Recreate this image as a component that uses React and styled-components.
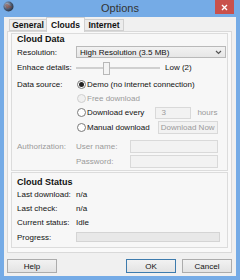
import React from "react"
import styled, { createGlobalStyle } from "styled-components"

const GlobalStyle = createGlobalStyle`
  html, body {
    margin: 0;
    padding: 0;
    background: #75abe6;
  }
  body {
    font-family: "Liberation Sans", Arial, sans-serif;
    font-size: 8px;
    color: #111;
  }
`

const Frame = styled.div`
  width: 240px;
  height: 280px;
  box-sizing: border-box;
  background: #75abe6;
  display: flex;
  flex-direction: column;
  padding: 0 4px 4px 4px;
`

const TitleBar = styled.div`
  height: 17px;
  display: flex;
  align-items: center;
  position: relative;
`

const Title = styled.div`
  flex: 1;
  text-align: center;
  font-size: 11px;
  color: #333;
  margin-top: -2px;
`

const AppIcon = styled.svg`
  position: absolute;
  left: -1px;
  top: 1px;
`

const CloseButton = styled.div`
  position: absolute;
  right: 2px;
  top: 0;
  width: 19px;
  height: 14px;
  background: #c9514c;
  display: flex;
  align-items: center;
  justify-content: center;
`

const Client = styled.div`
  flex: 1;
  background: #f0f0f0;
  display: flex;
  flex-direction: column;
`

const TabStrip = styled.div`
  height: 14px;
  display: flex;
  align-items: flex-end;
  padding-left: 5px;
  position: relative;
  z-index: 1;
`

const Tab = styled.div`
  box-sizing: border-box;
  height: ${({ $active }) => ($active ? 15 : 12)}px;
  margin-bottom: ${({ $active }) => ($active ? -1 : 0)}px;
  width: ${({ $w }) => $w}px;
  border: 1px solid #d0d0d0;
  border-bottom: ${({ $active }) => ($active ? "none" : "1px solid #d0d0d0")};
  background: ${({ $active }) => ($active ? "#f9f9f9" : "#ececec")};
  font-weight: bold;
  font-size: 8.5px;
  display: flex;
  align-items: ${({ $active }) => ($active ? "flex-start" : "center")};
  padding-top: ${({ $active }) => ($active ? 2 : 0)}px;
  justify-content: center;
  margin-right: -1px;
`

const TabPage = styled.div`
  box-sizing: border-box;
  margin: 0 4px 0 3px;
  height: 222px;
  border: 1px solid #d9d9d9;
  background: #f9f9f9;
  padding: 1px 3px 2px 3px;
  display: flex;
  flex-direction: column;
  gap: 1px;
`

const Group = styled.div`
  border: 1px solid #dcdcdc;
  background: #f7f7f7;
  padding: 0 0 ${({ $pb }) => $pb}px 5px;
  display: flex;
  flex-direction: column;
`

const Heading = styled.div`
  height: ${({ $h }) => $h}px;
  padding-top: ${({ $pt }) => $pt || 0}px;
  display: flex;
  align-items: center;
  font-weight: bold;
  font-size: 9px;
`

const Row = styled.div`
  height: ${({ $h }) => $h}px;
  margin-top: ${({ $mt }) => $mt || 0}px;
  display: flex;
  align-items: center;
`

const Label = styled.div`
  width: 59px;
  flex: none;
  color: ${({ $disabled }) => ($disabled ? "#9a9a9a" : "inherit")};
`

const Text = styled.span`
  color: ${({ $disabled }) => ($disabled ? "#9a9a9a" : "inherit")};
  margin-left: ${({ $ml }) => $ml || 0}px;
`

const Combo = styled.div`
  box-sizing: border-box;
  width: 150px;
  height: 12px;
  border: 1px solid #b9b9b9;
  background: linear-gradient(#f2f2f2, #e6e6e6);
  display: flex;
  align-items: center;
  padding: 0 3px;
  justify-content: space-between;
`

const SliderTrack = styled.div`
  position: relative;
  width: 84px;
  height: 2px;
  background: #dcdcdc;
  border: 1px solid #d0d0d0;
  box-sizing: border-box;
  margin-right: 5px;
`

const SliderThumb = styled.div`
  position: absolute;
  left: 26px;
  top: -6px;
  width: 7px;
  height: 13px;
  box-sizing: border-box;
  border: 1px solid #b8b8b8;
  background: #f4f4f4;
`

const Radio = styled.div`
  box-sizing: border-box;
  width: 9px;
  height: 9px;
  border-radius: 50%;
  border: 1px solid ${({ $disabled }) => ($disabled ? "#cfcfcf" : "#7a7a7a")};
  background: ${({ $disabled }) => ($disabled ? "#f0f0f0" : "#fff")};
  display: flex;
  align-items: center;
  justify-content: center;
  margin-left: 1px;
  margin-right: 1px;
  flex: none;
  &::after {
    content: "";
    display: ${({ $checked }) => ($checked ? "block" : "none")};
    width: 5px;
    height: 5px;
    border-radius: 50%;
    background: #222;
  }
`

const Input = styled.div`
  box-sizing: border-box;
  width: ${({ $w }) => $w}px;
  height: ${({ $h }) => $h || 13}px;
  margin-left: ${({ $ml }) => $ml || 0}px;
  border: 1px solid #d9d9d9;
  background: #f2f2f2;
  color: #9a9a9a;
  display: flex;
  align-items: center;
  padding-left: 5px;
`

const FlatButton = styled.div`
  box-sizing: border-box;
  width: ${({ $w }) => $w}px;
  height: 13px;
  margin-left: ${({ $ml }) => $ml || 0}px;
  border: 1px solid #d9d9d9;
  background: #f2f2f2;
  color: #9a9a9a;
  display: flex;
  align-items: center;
  justify-content: center;
`

const Progress = styled.div`
  box-sizing: border-box;
  width: 144px;
  height: 10px;
  border: 1px solid #d4d4d4;
  background: #e8e8e8;
`

const ButtonBar = styled.div`
  display: flex;
  align-items: center;
  padding: 6px 4px 0 3px;
`

const Button = styled.div`
  box-sizing: border-box;
  width: 50px;
  height: 14px;
  margin-left: ${({ $ml }) => $ml || 0}px;
  border: 1px solid ${({ $default }) => ($default ? "#3d7bad" : "#acacac")};
  background: linear-gradient(#f2f2f2, #e3e3e3);
  display: flex;
  align-items: center;
  justify-content: center;
  font-size: 8px;
`

const Spacer = styled.div`
  flex: 1;
`

const App = () => {
  return (
    <>
      <GlobalStyle />
      <Frame>
        <TitleBar>
          <AppIcon width="11" height="11" viewBox="0 0 11 11">
            <defs>
              <radialGradient id="g" cx="0.35" cy="0.35" r="0.7">
                <stop offset="0" stopColor="#b7c3d6" />
                <stop offset="0.6" stopColor="#4c5b73" />
                <stop offset="1" stopColor="#2a3242" />
              </radialGradient>
            </defs>
            <circle cx="5.5" cy="5.5" r="5" fill="url(#g)" />
            <path d="M2 4 Q4 2 6 4 T9 5 L8 7 Q6 6 4 8 Z" fill="#8a4a3a" opacity="0.6" />
          </AppIcon>
          <Title>Options</Title>
          <CloseButton>
            <svg width="7" height="7" viewBox="0 0 7 7">
              <path d="M1 1 L6 6 M6 1 L1 6" stroke="#fff" strokeWidth="1.4" />
            </svg>
          </CloseButton>
        </TitleBar>

        <Client>
          <TabStrip>
            <Tab $w={38}>General</Tab>
            <Tab $w={39} $active>Clouds</Tab>
            <Tab $w={40}>Internet</Tab>
          </TabStrip>

          <TabPage>
            <Group $pb={2}>
              <Heading $h={9}>Cloud Data</Heading>
              <Row $h={18}>
                <Label>Resolution:</Label>
                <Combo>
                  <span>High Resolution (3.5 MB)</span>
                  <svg width="7" height="5" viewBox="0 0 7 5">
                    <path d="M1 1 L3.5 3.5 L6 1" stroke="#555" strokeWidth="1.2" fill="none" />
                  </svg>
                </Combo>
              </Row>
              <Row $h={13}>
                <Label>Enhace details:</Label>
                <SliderTrack>
                  <SliderThumb />
                </SliderTrack>
                <Text>Low (2)</Text>
              </Row>
              <Row $h={14} $mt={3}>
                <Label>Data source:</Label>
                <Radio $checked />
                <Text>Demo (no internet connection)</Text>
              </Row>
              <Row $h={14}>
                <Label />
                <Radio $disabled />
                <Text $disabled>Free download</Text>
              </Row>
              <Row $h={15}>
                <Label />
                <Radio />
                <Text>Download every</Text>
                <Input $w={36} $h={12} $ml={11}>3</Input>
                <Text $disabled $ml={6}>hours</Text>
              </Row>
              <Row $h={14}>
                <Label />
                <Radio />
                <Text>Manual download</Text>
                <FlatButton $w={60} $ml={8}>Download Now</FlatButton>
              </Row>
              <Row $h={16} $mt={4}>
                <Label $disabled>Authorization:</Label>
                <Text $disabled>User name:</Text>
                <Input $w={88} $ml={13} />
              </Row>
              <Row $h={14}>
                <Label />
                <Text $disabled>Password:</Text>
                <Input $w={88} $ml={17} />
              </Row>
            </Group>

            <Group $pb={3}>
              <Heading $h={10} $pt={4}>Cloud Status</Heading>
              <Row $h={14}>
                <Label>Last download:</Label>
                <Text>n/a</Text>
              </Row>
              <Row $h={14}>
                <Label>Last check:</Label>
                <Text>n/a</Text>
              </Row>
              <Row $h={14}>
                <Label>Current status:</Label>
                <Text>Idle</Text>
              </Row>
              <Row $h={14} $mt={1}>
                <Label>Progress:</Label>
                <Progress />
              </Row>
            </Group>
          </TabPage>

          <ButtonBar>
            <Button>Help</Button>
            <Spacer />
            <Button $default>OK</Button>
            <Button $ml={6}>Cancel</Button>
          </ButtonBar>
        </Client>
      </Frame>
    </>
  )
}

export default App
